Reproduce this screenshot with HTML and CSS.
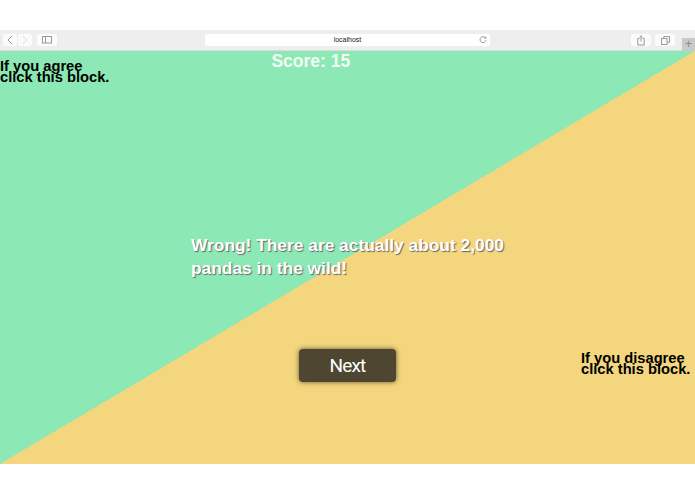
FILE: index.html
```html
<!DOCTYPE html>
<html lang="en">
<head>
    <meta charset="UTF-8">
    <meta name="viewport" content="width=device-width, initial-scale=1.0">
    <title>Panda Quiz</title>
    <link rel="stylesheet" href="styles.css">
</head>
<body>
    <div class="toolbar">
        <div class="nav-group">
            <span class="tool-btn back"><svg width="8" height="10" viewBox="0 0 8 10"><path d="M6 1 L2 5 L6 9" class="glyph"/></svg></span>
            <span class="tool-btn forward"><svg width="8" height="10" viewBox="0 0 8 10"><path d="M2 1 L6 5 L2 9" class="glyph faint"/></svg></span>
            <span class="tool-btn sidebar"><svg width="10" height="8" viewBox="0 0 10 8"><rect x="0.5" y="0.5" width="9" height="6.5" class="glyph"/><path d="M3.5 0.5 V7" class="glyph"/></svg></span>
        </div>
        <div class="address">
            <span class="url">localhost</span>
            <svg class="reload" width="8" height="8" viewBox="0 0 8 8"><path d="M6.6 2 A3 3 0 1 0 7 4.2 M6.8 0.6 V2.3 H5.1" class="glyph"/></svg>
        </div>
        <div class="action-group">
            <span class="tool-btn action"><svg width="8" height="11" viewBox="0 0 8 11"><path d="M2.4 3.5 H0.8 V10 H7.2 V3.5 H5.6 M4 6.5 V0.8 M2.5 2.2 L4 0.8 L5.5 2.2" class="glyph"/></svg></span>
            <span class="tool-btn action"><svg width="9" height="9" viewBox="0 0 9 9"><rect x="0.5" y="2.5" width="5.5" height="6" class="glyph"/><path d="M2.8 2.5 V0.5 H8.5 V6.3 H6" class="glyph"/></svg></span>
        </div>
        <span class="new-tab">+</span>
    </div>

    <div class="stage">
        <div class="top-row">
            <p class="block-label">If you agree<br>click this block.</p>
            <h1 class="score">Score: 15</h1>
        </div>
        <p class="message">Wrong! There are actually about 2,000<br>pandas in the wild!</p>
        <div class="bottom-row">
            <button class="next">Next</button>
            <p class="block-label">If you disagree<br>click this block.</p>
        </div>
    </div>
</body>
</html>
```

FILE: styles.css
```css
body {
    margin: 0;
    padding-top: 30px;
    height: 494px;
    box-sizing: border-box;
    background-color: #fff;
    font-family: "Liberation Sans", Arial, sans-serif;
    overflow: hidden;
}

.toolbar {
    position: relative;
    display: flex;
    align-items: flex-start;
    height: 21px;
    padding: 4px 0 0 3px;
    box-sizing: border-box;
    background-color: #eeeeee;
    border-bottom: 1px solid #dcdcdc;
}

.nav-group,
.action-group {
    display: flex;
    gap: 1px;
}

.tool-btn {
    display: flex;
    align-items: center;
    justify-content: center;
    width: 14px;
    height: 12px;
    background-color: #fbfbfb;
    border-radius: 2px;
}

.tool-btn.sidebar {
    width: 20px;
    margin-left: 4px;
}

.tool-btn.action {
    width: 20px;
}

.action-group {
    gap: 4px;
    margin-left: 141px;
}

.glyph {
    fill: none;
    stroke: #999;
    stroke-width: 1;
}

.glyph.faint {
    stroke: #ddd;
}

.address {
    position: relative;
    width: 285px;
    height: 12px;
    margin-left: 148px;
    background-color: #fff;
    border-radius: 2px;
    text-align: center;
    font-size: 7px;
    line-height: 12px;
    color: #222;
}

.reload {
    position: absolute;
    top: 2px;
    right: 3px;
}

.new-tab {
    position: absolute;
    top: 8px;
    right: 0;
    width: 13px;
    height: 13px;
    background-color: #c9c9c9;
    color: #8a8a8a;
    font-size: 12px;
    line-height: 13px;
    text-align: center;
}

.stage {
    display: flex;
    flex-direction: column;
    height: 413px;
    background: linear-gradient(to bottom right, #8ce9b5 50%, #f3d67d 50%);
}

.top-row {
    display: flex;
    align-items: flex-start;
    height: 183px;
}

.block-label {
    flex-shrink: 0;
    margin: 10px 0 0;
    font-size: 14.7px;
    font-weight: bold;
    line-height: 10.5px;
    white-space: nowrap;
    color: #000;
}

.score {
    margin: 0 0 0 162px;
    font-size: 17.5px;
    font-weight: bold;
    line-height: 21px;
    color: #f4fbf4;
}

.message {
    margin: 0 0 0 191px;
    font-size: 17.35px;
    font-weight: bold;
    line-height: 23px;
    color: #fff;
    text-shadow: 1px 1px 1px #666;
}

.bottom-row {
    display: flex;
    align-items: flex-start;
    margin-top: 69px;
    padding-left: 299px;
}

.next {
    flex-shrink: 0;
    width: 97px;
    height: 33px;
    padding: 0;
    border: none;
    border-radius: 4px;
    background-color: #4e4631;
    box-shadow: 0 0 5px #5f5432;
    color: #fff;
    font-family: Roboto, sans-serif;
    font-size: 19px;
    letter-spacing: -0.8px;
}

.bottom-row .block-label {
    margin: 4px 0 0 185px;
}
```
